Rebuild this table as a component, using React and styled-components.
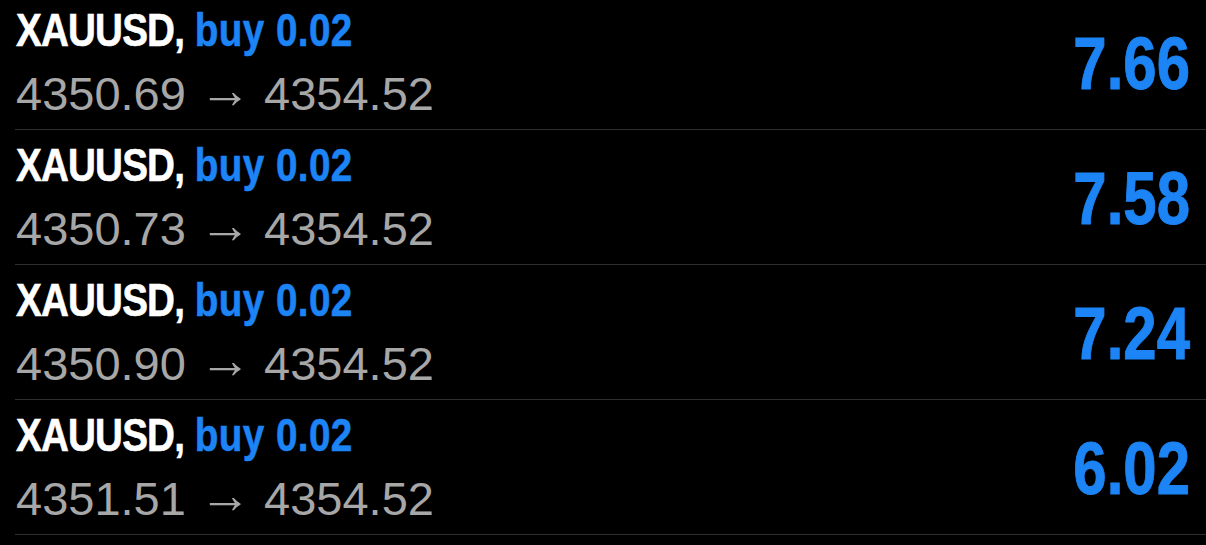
import styled, { createGlobalStyle } from 'styled-components';

const trades = [
  { symbol: 'XAUUSD', side: 'buy', volume: '0.02', open: '4350.69', close: '4354.52', profit: '7.66' },
  { symbol: 'XAUUSD', side: 'buy', volume: '0.02', open: '4350.73', close: '4354.52', profit: '7.58' },
  { symbol: 'XAUUSD', side: 'buy', volume: '0.02', open: '4350.90', close: '4354.52', profit: '7.24' },
  { symbol: 'XAUUSD', side: 'buy', volume: '0.02', open: '4351.51', close: '4354.52', profit: '6.02' },
];

function App() {
  return (
    <>
      <GlobalStyle />
      <TradeList>
        {trades.map((t, i) => (
          <TradeRow key={i}>
            <Info>
              <Title>
                <Symbol>{t.symbol},</Symbol> <Side>{t.side} {t.volume}</Side>
              </Title>
              <Prices>
                {t.open} <Arrow>→</Arrow> {t.close}
              </Prices>
            </Info>
            <Profit>{t.profit}</Profit>
          </TradeRow>
        ))}
      </TradeList>
    </>
  );
}

const GlobalStyle = createGlobalStyle`
  html, body {
    margin: 0;
    background: #000;
    overflow: hidden;
  }
`;

const TradeList = styled.ul`
  list-style: none;
  margin: -5px 0 0 0;
  padding: 0;
`;

const TradeRow = styled.li`
  display: flex;
  align-items: center;
  justify-content: space-between;
  margin-left: 15px;
  padding: 13px 16px 9px 1px;
  border-bottom: 1px solid #2f2f2f;
`;

const Info = styled.div`
  display: flex;
  flex-direction: column;
  align-items: flex-start;
  gap: 16px;
`;

// condensed bold face: Arial-metric bold squeezed horizontally
const Title = styled.div`
  font-family: "Liberation Sans", Arial, sans-serif;
  font-weight: 700;
  font-size: 46px;
  line-height: 44px;
  color: #fff;
  white-space: nowrap;
  -webkit-text-stroke: 0.6px currentColor;
  transform: scaleX(0.84);
  transform-origin: left center;
`;

const Symbol = styled.span`
  letter-spacing: -1px;
`;

const Side = styled.span`
  color: #1c84f4;
  letter-spacing: 0.5px;
`;

const Prices = styled.div`
  font-family: "Liberation Sans", Arial, sans-serif;
  font-size: 47px;
  line-height: 52px;
  color: #a7a7a7;
  white-space: nowrap;
`;

const Arrow = styled.span`
  font-size: 52px;
  line-height: 0;
  vertical-align: 2px;
`;

const Profit = styled.div`
  font-family: "Liberation Sans", Arial, sans-serif;
  font-weight: 700;
  font-size: 74px;
  line-height: 74px;
  color: #1c84f4;
  -webkit-text-stroke: 1px currentColor;
  transform: scaleX(0.81);
  transform-origin: right center;
`;

export default App;
